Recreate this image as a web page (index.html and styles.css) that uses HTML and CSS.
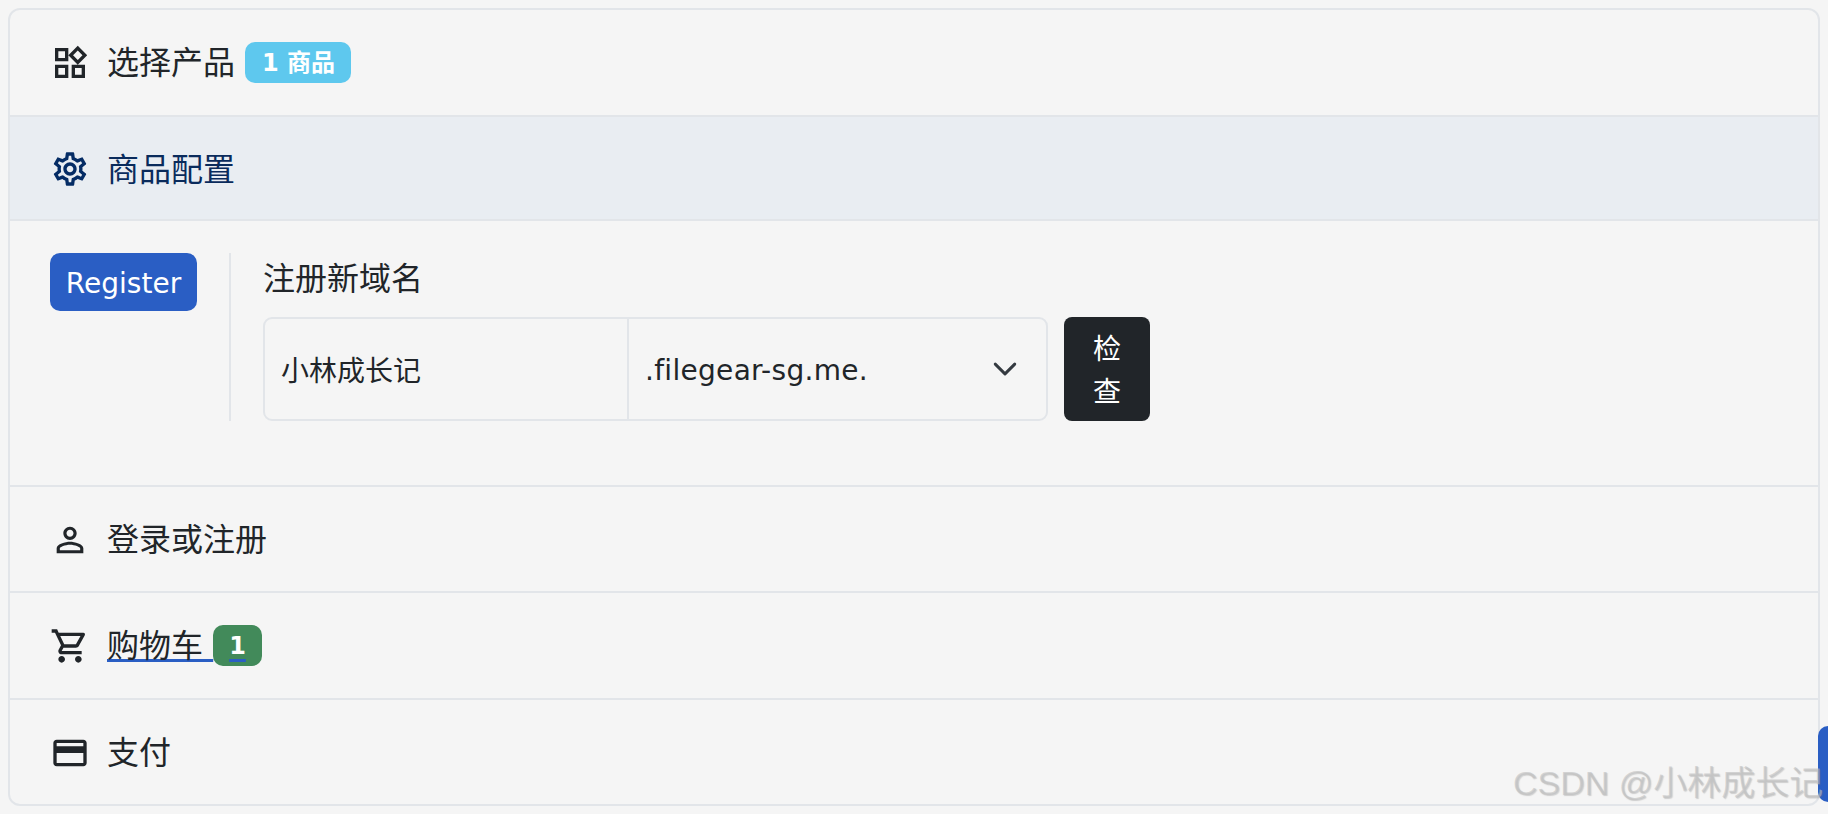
FILE: index.html
```html
<!DOCTYPE html>
<html lang="zh-CN">
<head>
    <meta charset="UTF-8">
    <meta name="viewport" content="width=device-width, initial-scale=1.0">
    <title>商品配置</title>
    <link rel="stylesheet" href="styles.css">
</head>
<body>

    <div class="accordion">
        <div class="step step-first">
            <svg class="icon" viewBox="0 0 24 24"><path d="M16.66 4.52l2.83 2.83-2.83 2.83-2.83-2.83 2.83-2.83M9 5v4H5V5h4m10 10v4h-4v-4h4M9 15v4H5v-4h4m7.66-13.31L11 7.34 16.66 13l5.66-5.66-5.66-5.65zM11 3H3v8h8V3zm10 10h-8v8h8v-8zm-10 0H3v8h8v-8z"/></svg>
            <span class="step-title">选择产品<span class="badge badge-info">1 商品</span></span>
        </div>

        <div class="step step-active">
            <svg class="icon" viewBox="0 0 24 24"><path d="M19.43 12.98c.04-.32.07-.64.07-.98 0-.34-.03-.66-.07-.98l2.11-1.65c.19-.15.24-.42.12-.64l-2-3.46c-.09-.16-.26-.25-.44-.25-.06 0-.12.01-.17.03l-2.49 1c-.52-.4-1.08-.73-1.69-.98l-.38-2.65C14.46 2.18 14.25 2 14 2h-4c-.25 0-.46.18-.49.42l-.38 2.65c-.61.25-1.17.59-1.69.98l-2.49-1c-.06-.02-.12-.03-.18-.03-.17 0-.34.09-.43.25l-2 3.46c-.13.22-.07.49.12.64l2.11 1.65c-.04.32-.07.65-.07.98 0 .33.03.66.07.98l-2.11 1.65c-.19.15-.24.42-.12.64l2 3.46c.09.16.26.25.44.25.06 0 .12-.01.17-.03l2.49-1c.52.4 1.08.73 1.69.98l.38 2.65c.03.24.24.42.49.42h4c.25 0 .46-.18.49-.42l.38-2.65c.61-.25 1.17-.59 1.69-.98l2.49 1c.06.02.12.03.18.03.17 0 .34-.09.43-.25l2-3.46c.12-.22.07-.49-.12-.64l-2.11-1.65zm-1.98-1.71c.04.31.05.52.05.73 0 .21-.02.43-.05.73l-.14 1.13.89.7 1.08.84-.7 1.21-1.27-.51-1.04-.42-.9.68c-.43.32-.84.56-1.25.73l-1.06.43-.16 1.13-.2 1.35h-1.4l-.19-1.35-.16-1.13-1.06-.43c-.43-.18-.83-.41-1.23-.71l-.91-.7-1.06.43-1.27.51-.7-1.21 1.08-.84.89-.7-.14-1.13c-.03-.31-.05-.54-.05-.74s.02-.43.05-.73l.14-1.13-.89-.7-1.08-.84.7-1.21 1.27.51 1.04.42.9-.68c.43-.32.84-.56 1.25-.73l1.06-.43.16-1.13.2-1.35h1.39l.19 1.35.16 1.13 1.06.43c.43.18.83.41 1.23.71l.91.7 1.06-.43 1.27-.51.7 1.21-1.07.85-.89.7.14 1.13zM12 8c-2.21 0-4 1.79-4 4s1.79 4 4 4 4-1.79 4-4-1.79-4-4-4zm0 6c-1.1 0-2-.9-2-2s.9-2 2-2 2 .9 2 2-.9 2-2 2z"/></svg>
            <span class="step-title">商品配置</span>
        </div>

        <div class="step-body">
            <button class="btn btn-primary">Register</button>
            <div class="register-pane">
                <label class="register-label" for="domain">注册新域名</label>
                <div class="domain-row">
                    <div class="input-group">
                        <input class="domain-input" id="domain" type="text" value="小林成长记">
                        <select class="domain-select">
                            <option>.filegear-sg.me.</option>
                        </select>
                    </div>
                    <button class="btn btn-dark">检查</button>
                </div>
            </div>
        </div>

        <div class="step step-login">
            <svg class="icon" viewBox="0 0 24 24"><path d="M12 5.9c1.16 0 2.1.94 2.1 2.1s-.94 2.1-2.1 2.1S9.9 9.16 9.9 8s.94-2.1 2.1-2.1m0 9c2.97 0 6.1 1.46 6.1 2.1v1.1H5.9V17c0-.64 3.13-2.1 6.1-2.1M12 4C9.79 4 8 5.79 8 8s1.79 4 4 4 4-1.79 4-4-1.79-4-4-4zm0 9c-2.67 0-8 1.34-8 4v3h16v-3c0-2.66-5.33-4-8-4z"/></svg>
            <span class="step-title">登录或注册</span>
        </div>

        <div class="step step-tall">
            <svg class="icon" viewBox="0 0 24 24"><path d="M15.55 13c.75 0 1.41-.41 1.75-1.03l3.58-6.49c.37-.66-.11-1.48-.87-1.48H5.21l-.94-2H1v2h2l3.6 7.59-1.35 2.44C4.52 15.37 5.48 17 7 17h12v-2H7l1.1-2h7.45zM6.16 6h12.15l-2.76 5H8.53L6.16 6zM7 18c-1.1 0-1.99.9-1.99 2S5.9 22 7 22s2-.9 2-2-.9-2-2-2zm10 0c-1.1 0-1.99.9-1.99 2s.89 2 1.99 2 2-.9 2-2-.9-2-2-2z"/></svg>
            <a class="step-title cart-link" href="#">购物车 <span class="badge badge-success">1</span></a>
        </div>

        <div class="step step-last">
            <svg class="icon" viewBox="0 0 24 24"><path d="M20 4H4c-1.11 0-1.99.89-1.99 2L2 18c0 1.11.89 2 2 2h16c1.11 0 2-.89 2-2V6c0-1.11-.89-2-2-2zm0 14H4v-6h16v6zm0-10H4V6h16v2z"/></svg>
            <span class="step-title">支付</span>
        </div>
    </div>

    <div class="side-tab"></div>
    <div class="watermark">CSDN @小林成长记</div>

</body>
</html>
```

FILE: styles.css
```css
body {
    font-family: "DejaVu Sans", "Noto Sans CJK SC", sans-serif;
    font-size: 28px;
    color: #212529;
    background-color: #f5f5f5;
    margin: 0;
    padding: 8px;
    height: 814px;
    box-sizing: border-box;
    overflow: hidden;
}

.accordion {
    border: 2px solid #e2e5e9;
    border-radius: 12px;
    height: 798px;
    box-sizing: border-box;
    overflow: hidden;
}

.step {
    display: flex;
    align-items: center;
    height: 106px;
    padding-left: 40px;
    box-sizing: border-box;
    border-bottom: 2px solid #e2e5e9;
    font-size: 32px;
}

.step-first {
    height: 107px;
}

.step-tall {
    height: 107px;
}

.step-active {
    height: 104px;
    background: #e9edf2;
    color: #0a2b5c;
}

.step-last {
    border-bottom: none;
}

.step-title {
    margin-bottom: 6px;
}

.step-active .step-title {
    margin-bottom: 2px;
}

.step-login .step-title {
    margin-bottom: 4px;
}

.icon {
    width: 40px;
    height: 40px;
    margin-right: 17px;
    margin-top: 1px;
    flex-shrink: 0;
    fill: currentColor;
}

.step-active .icon {
    fill: #052c65;
}

.step-last .icon {
    margin-top: -1px;
}

.badge {
    font-size: 24px;
    font-weight: bold;
    color: white;
    border-radius: 10px;
    vertical-align: 3px;
}

.badge-info {
    background: #5ec8ee;
    margin-left: 10px;
    padding: 7px 16px 6px 17px;
}

.badge-success {
    background: #428a5a;
    padding: 7px 16px 6px;
}

.cart-link {
    color: #212529;
    text-decoration: underline #2a5ec4 3px;
    text-underline-offset: 2px;
}

.step-body {
    display: flex;
    align-items: flex-start;
    height: 266px;
    padding: 32px 0 0 40px;
    box-sizing: border-box;
    border-bottom: 2px solid #e2e5e9;
}

.btn {
    font-family: inherit;
    font-size: 28px;
    color: white;
    border: none;
    cursor: pointer;
}

.btn-primary {
    background: #2a5ec4;
    width: 147px;
    height: 58px;
    padding: 2px 0 0;
    border-radius: 10px;
}

.btn-dark {
    background: #212529;
    width: 86px;
    height: 104px;
    padding: 3px 18px 0;
    line-height: 43px;
    border-radius: 8px;
}

.register-pane {
    margin-left: 32px;
    padding-left: 32px;
    border-left: 2px solid #e2e5e9;
}

.register-label {
    display: block;
    font-size: 32px;
    line-height: 52px;
    margin-bottom: 12px;
}

.domain-row {
    display: flex;
    gap: 16px;
}

.input-group {
    display: flex;
    width: 785px;
    height: 104px;
    box-sizing: border-box;
    border: 2px solid #e2e5e9;
    border-radius: 9px;
}

.domain-input,
.domain-select {
    font-family: inherit;
    font-size: 28px;
    color: #212529;
    background-color: transparent;
    border: none;
    outline: none;
    padding: 0 16px;
    box-sizing: border-box;
}

.domain-input {
    width: 364px;
    border-right: 2px solid #e2e5e9;
}

.domain-select {
    flex: 1;
    appearance: none;
    padding: 2px 15px 0 16px;
    letter-spacing: 0.3px;
    background-image: url("data:image/svg+xml,%3csvg xmlns='http://www.w3.org/2000/svg' viewBox='0 0 16 16'%3e%3cpath fill='none' stroke='%23343a40' stroke-linecap='round' stroke-linejoin='round' stroke-width='1.8' d='m2 5 6 6 6-6'/%3e%3c/svg%3e");
    background-repeat: no-repeat;
    background-position: right 28px center;
    background-size: 26px 26px;
}

.side-tab {
    position: absolute;
    right: 0;
    top: 726px;
    width: 10px;
    height: 76px;
    background: #2a5ec4;
    border-radius: 12px 0 0 12px;
}

.watermark {
    position: absolute;
    left: 1513px;
    top: 761px;
    font-family: "Liberation Sans", "Noto Sans CJK SC", sans-serif;
    font-size: 34px;
    line-height: 44px;
    white-space: nowrap;
    color: rgba(190, 190, 190, 0.6);
    text-shadow: 1px 1px 1px rgba(120, 120, 120, 0.3);
}
```
